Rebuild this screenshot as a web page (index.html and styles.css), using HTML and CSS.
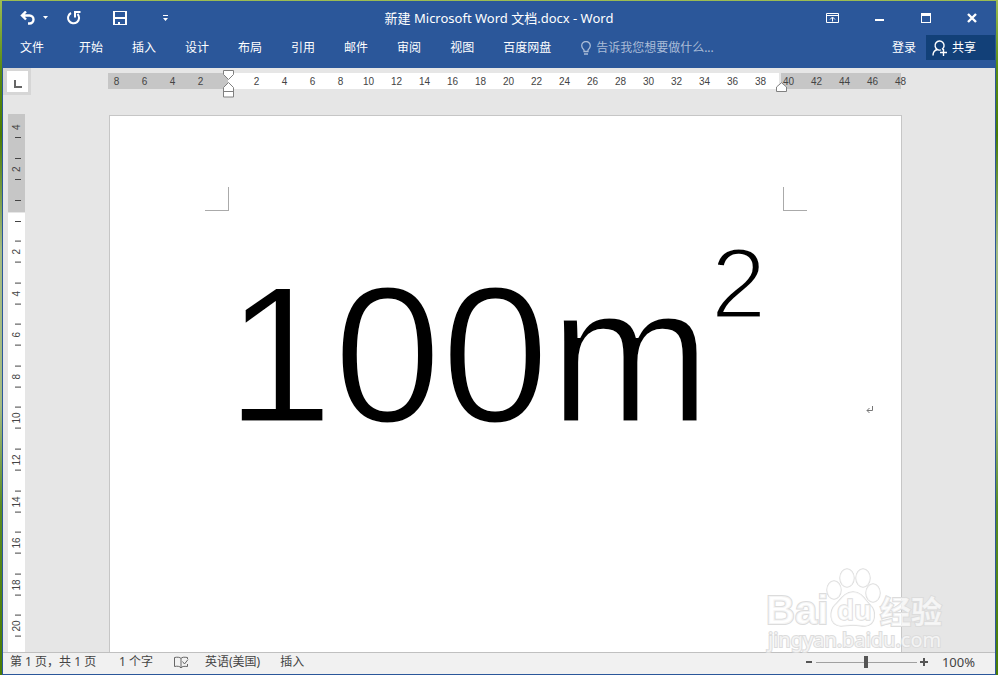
FILE: index.html
```html
<!DOCTYPE html>
<html lang="zh-CN">
<head>
<meta charset="utf-8">
<title>新建 Microsoft Word 文档.docx - Word</title>
<link rel="stylesheet" href="styles.css">
</head>
<body>
<div class="window">
  <header class="ribbon">
    <div class="titlebar">
      <div class="quick">
        <button class="icon-btn undo" aria-label="撤消"><svg width="28" height="14" viewBox="0 0 28 14"><path d="M1.500 4.500H9.500a4 4 0 0 1 0 8H8M6 .5L2 4.500l4 4" fill="none" stroke="#fff" stroke-width="2.400"/><path d="M23 5h5l-2.500 3z" fill="#fff"/></svg></button>
        <button class="icon-btn redo" aria-label="重复"><svg width="14" height="14" viewBox="0 0 14 14"><path d="M4 2A5.500 5.500 0 1 0 10.500 3" fill="none" stroke="#fff" stroke-width="2"/><path d="M8 6.500V1h5.500" fill="none" stroke="#fff" stroke-width="2"/></svg></button>
        <button class="icon-btn save" aria-label="保存"><svg width="14" height="14" viewBox="0 0 14 14"><path d="M0 0h14v14H0zM2 1v5h10V1zM2 8v5h1V9h8v4h1V8z" fill="#fff" fill-rule="evenodd"/><path d="M3 9h8v4H7v-2H5v2H3z" fill="#2b579a"/></svg></button>
        <button class="icon-btn custom" aria-label="自定义快速访问工具栏"><svg width="5" height="6" viewBox="0 0 5 6"><path d="M0 0h5v1H0zM0 3h5L2.500 6z" fill="#fff"/></svg></button>
      </div>
      <h1 class="title">新建 Microsoft Word 文档.docx - Word</h1>
      <div class="controls">
        <button class="icon-btn" aria-label="功能区显示选项"><svg width="13" height="10" viewBox="0 0 13 10"><path d="M.5.5h12v9H.5zM.5 2.500h12M6.500 8.500V4.500M4 6.500l2.500-2.500L9 6.500" fill="none" stroke="#fff"/></svg></button>
        <button class="icon-btn" aria-label="最小化"><svg width="10" height="10" viewBox="0 0 10 10"><path d="M0 6h9v2H0z" fill="#fff"/></svg></button>
        <button class="icon-btn" aria-label="最大化"><svg width="10" height="10" viewBox="0 0 10 10"><path d="M0 0h10v10H0zM1 3v6h8V3z" fill="#fff" fill-rule="evenodd"/></svg></button>
        <button class="icon-btn" aria-label="关闭"><svg width="10" height="10" viewBox="0 0 10 10"><path d="M1 1l8 8M9 1L1 9" stroke="#fff" stroke-width="2.400"/></svg></button>
      </div>
    </div>
    <div class="tabs">
      <button class="tab file">文件</button>
      <nav class="tab-list">
        <button class="tab">开始</button><button class="tab">插入</button><button class="tab">设计</button><button class="tab">布局</button><button class="tab">引用</button><button class="tab">邮件</button><button class="tab">审阅</button><button class="tab">视图</button><button class="tab">百度网盘</button>
      </nav>
      <label class="tell">
        <svg width="10" height="14" viewBox="0 0 10 14"><path d="M3 10.500V9C2 8 .7 6.800.7 4.800a4.300 4.300 0 0 1 8.600 0C9.300 6.800 8 8 7 9v1.500zM3 13h4" fill="none" stroke="#aabcd7" stroke-width="1.300"/></svg>
        <input type="text" placeholder="告诉我您想要做什么..." aria-label="告诉我您想要做什么">
      </label>
      <button class="tab">登录</button>
      <button class="share"><svg width="16" height="16" viewBox="0 0 16 16"><path d="M1 15.500C1 12 3 10 5.500 9.500A4.500 4.500 0 1 1 10 9.300M5.500 9.500C6 10 8 10.500 9 9.800M11.500 9v7M8 12.500h7" fill="none" stroke="#fff" stroke-width="1.400"/></svg>共享</button>
    </div>
  </header>

  <main class="workspace">
    <button class="tabstop" aria-label="左对齐式制表符"><span></span></button>
    <div class="ruler-row">
      <div class="ruler">
        <div class="marks"><span>8</span><span>6</span><span>4</span><span>2</span><span></span><span>2</span><span>4</span><span>6</span><span>8</span><span>10</span><span>12</span><span>14</span><span>16</span><span>18</span><span>20</span><span>22</span><span>24</span><span>26</span><span>28</span><span>30</span><span>32</span><span>34</span><span>36</span><span>38</span><span>40</span><span>42</span><span>44</span><span>46</span><span>48</span></div>
        <svg class="indent-left" width="11" height="28" viewBox="0 0 11 28"><path d="M.5.500h10v4l-5 5-5-5zM5.500 12.500l5 5v9.500H.5v-9.500zM.5 21.500h10" fill="#fff" stroke="#808080"/></svg>
        <svg class="indent-right" width="11" height="10" viewBox="0 0 11 10"><path d="M5.500.7l5 4.300v4.500H.5V5z" fill="#fff" stroke="#808080"/></svg>
      </div>
    </div>
    <div class="vruler">
      <div class="vmargin"><span>4</span><span>2</span></div>
      <div class="vbody"><span>2</span><span>4</span><span>6</span><span>8</span><span>10</span><span>12</span><span>14</span><span>16</span><span>18</span><span>20</span></div>
    </div>
    <div class="canvas">
      <article class="page">
        <div class="crops"><i class="crop start"></i><i class="crop end"></i></div>
        <div class="line">
          <p>100m<sup>2</sup></p>
          <svg class="mark" width="8" height="8" viewBox="0 0 8 8"><path d="M6.500 0v4.500H1M3.500 2L1 4.500 3.500 7" fill="none" stroke="#777"/></svg>
        </div>
      </article>
    </div>
  </main>

  <footer class="status">
    <span class="pages">第 1 页，共 1 页</span>
    <span class="words">1 个字</span>
    <button class="icon-btn proof" aria-label="校对"><svg width="15" height="13" viewBox="0 0 15 13"><path d="M7 2.500C6 1 3 1 .5 1.500v9C3 10 6 10 7 12V2.500C8 1 10 1 13.500 1.500V3M7 12c.5-1.500 3-2 6.500-1.500V8M8.500 5.500l2 2.500L14 3.500" fill="none" stroke="#666"/></svg></button>
    <button class="lang">英语(美国)</button>
    <button class="mode">插入</button>
    <div class="zoom">
      <button class="icon-btn" aria-label="缩小"><svg width="6" height="8" viewBox="0 0 6 8"><path d="M0 3h6v2H0z" fill="#555"/></svg></button>
      <input type="range" min="10" max="190" value="100" aria-label="缩放">
      <button class="icon-btn" aria-label="放大"><svg width="8" height="8" viewBox="0 0 8 8"><path d="M0 3h8v2H0zM3 0h2v8H3z" fill="#555"/></svg></button>
      <button class="percent">100%</button>
    </div>
  </footer>

  <svg class="watermark" width="184" height="86" viewBox="0 0 184 86">
    <g fill="#fff" fill-opacity=".7" stroke="#dcdcdc" stroke-width="1.500" paint-order="stroke">
      <g stroke-width="2"><text class="wm-logo" x="2" y="57">Bai</text><text class="wm-cjk" x="116" y="56">经验</text><text class="wm-url" x="4" y="80">jingyan.baidu.com</text></g>
      <ellipse cx="70" cy="23" rx="7" ry="9"/><ellipse cx="83" cy="11" rx="7" ry="9"/><ellipse cx="99" cy="11" rx="7" ry="9"/><ellipse cx="109" cy="26" rx="7" ry="9"/>
      <path d="M89 25c9 0 12 8 17 13 6 5 7 20-5 21-5 0-7-1-12-1s-8 1-12 1c-13-1-11-16-6-21 5-4 9-13 18-13z"/>
      <text class="wm-du" x="73" y="53">du</text>
    </g>
  </svg>
</div>
</body>
</html>
```
FILE: styles.css
```css
* { box-sizing: border-box; }

body {
  margin: 0;
  height: 100vh;
  padding: 1px 2px 0;
  background: linear-gradient(#9cbc52 0, #5a8c14 10%, #4a7c04 20%, #a4bc84 37%, #a4bc84 60%, #5a8c24 75%, #4a7c04);
  font: 12px/16px "Noto Sans", "Noto Sans CJK SC", sans-serif;
  overflow: hidden;
}

button, input {
  margin: 0;
  padding: 0;
  border: 0;
  background: none;
  font: inherit;
  color: inherit;
}

svg { display: block; }

.window {
  position: relative;
  display: flex;
  flex-direction: column;
  height: 100%;
  border: 1px solid #2b579a;
  border-top: 0;
  background: #e6e6e6;
}

/* Title bar and tabs */
.ribbon { flex: none; background: #2b579a; color: #fff; padding-bottom: 8px; }

.titlebar {
  display: grid;
  grid-template-columns: 1fr auto 1fr;
  align-items: center;
  height: 34px;
}
.quick { display: flex; align-items: center; padding-left: 17px; }
.redo { margin-left: 19px; }
.save { margin-left: 32px; }
.custom { margin-left: 36px; }
.title { margin: 0; font-size: 13px; font-weight: 400; line-height: 16px; }
.controls { display: flex; align-items: center; justify-content: flex-end; gap: 36px; padding-right: 18px; }

.tabs { display: flex; align-items: center; height: 25px; padding-left: 17px; }
.tab-list { display: flex; gap: 29px; margin: 0 30px 0 35px; }
.tell { display: flex; flex: 1; align-items: center; gap: 5px; }
.tell input { flex: 1; min-width: 0; outline: 0; }
.tell input::placeholder { color: #aabcd7; opacity: 1; }
.share {
  display: flex;
  align-items: center;
  gap: 4px;
  height: 25px;
  margin-left: 10px;
  padding: 0 19px 0 6px;
  background: #124078;
}

/* Rulers and document */
.workspace {
  flex: 1;
  min-height: 0;
  display: grid;
  grid-template: 46px 1fr / 22px 1fr;
}

.tabstop {
  width: 28px;
  height: 27px;
  padding: 8px 7px 4px;
  background: #fff;
  border: 3px solid #d6d6d6;
  border-left-width: 4px;
}
.tabstop span {
  display: block;
  width: 8px;
  height: 8px;
  border: solid #666;
  border-width: 0 0 2px 2px;
}

.ruler-row { display: flex; justify-content: center; padding: 5px 12px 0 0; }
.ruler {
  position: relative;
  width: 793px;
  height: 16px;
  background: linear-gradient(90deg, #c6c6c6 120px, #fff 120px 671px, #e6e6e6 671px 673px, #c6c6c6 673px);
}
.marks {
  display: grid;
  grid-template-columns: repeat(29, 28px);
  margin-left: -5px;
  font: 10px/17px "Liberation Sans", sans-serif;
  color: #444;
  text-align: center;
}
.indent-left { position: absolute; left: 115px; top: -3px; }
.indent-right { position: absolute; left: 668px; top: 9px; }

.vruler { width: 17px; margin-left: 5px; overflow: hidden; font: 10px/16px "Liberation Sans", sans-serif; color: #444; }
.vmargin {
  display: flex;
  flex-direction: column;
  justify-content: flex-end;
  height: 98px;
  padding-bottom: 22px;
  background: linear-gradient(#444, #444) 7px 86px / 6px 1px no-repeat #c6c6c6;
}
.vbody {
  display: grid;
  grid-template-rows: repeat(10, 1fr);
  height: 440px;
  margin-top: 1px;
  padding: 18px 0 6px;
  background: linear-gradient(#444, #444) 7px 8px / 6px 1px no-repeat #fff;
}
.vruler span {
  display: flex;
  align-items: center;
  justify-content: center;
  width: 17px;
  writing-mode: vertical-rl;
  transform: rotate(180deg);
  background:
    linear-gradient(#444, #444) 4px 10px / 6px 1px no-repeat,
    linear-gradient(#444, #444) 4px 31px / 6px 1px no-repeat;
}
.vmargin span { flex: none; height: 42px; }
.vmargin span:first-child { background: linear-gradient(#444, #444) 4px 10px / 6px 1px no-repeat; }

.canvas { display: flex; justify-content: center; padding: 1px 10px 0 0; overflow: hidden; }
.page {
  width: 793px;
  min-height: 700px;
  padding-top: 71px;
  background: #fff;
  border: 1px solid #c6c6c6;
}
.crops { display: flex; justify-content: space-between; padding: 0 94px 0 95px; }
.crop { width: 24px; height: 24px; border: 0 solid #aaa; border-bottom-width: 1px; }
.crop.start { border-right-width: 1px; }
.crop.end { border-left-width: 1px; }
.line { display: flex; align-items: baseline; justify-content: space-between; padding: 0 27px 0 116px; }
.line p {
  margin: 0;
  font: 194px/288px "Liberation Sans", sans-serif;
  color: #000;
  -webkit-text-stroke: 3px #fff;
}
.line sup { font-size: 100px; line-height: 0; vertical-align: 104px; }
.mark { position: relative; bottom: 8px; }

/* Status bar */
.status {
  flex: none;
  display: flex;
  align-items: center;
  height: 22px;
  padding: 0 20px 2px 7px;
  background: #f1f1f1;
  border-top: 1px solid #c0c0c0;
  border-bottom: 1px solid #f1f1f1;
  color: #444;
}
.pages { width: 109px; }
.words { width: 55px; }
.lang { margin-left: 16px; }
.mode { margin-left: 20px; }
.zoom { display: flex; align-items: center; margin-left: auto; }
.zoom input {
  appearance: none;
  width: 101px;
  height: 12px;
  margin: 0 3px 0 4px;
  background: linear-gradient(#a0a0a0, #a0a0a0) center / 100% 1px no-repeat;
}
.zoom input::-webkit-slider-thumb { appearance: none; width: 4px; height: 12px; background: #555; }
.percent { margin-left: 14px; font-size: 13px; }

/* Site watermark laid over the document */
.watermark { position: absolute; right: 47px; bottom: 21px; pointer-events: none; }
.wm-logo { font: 700 40px "Liberation Sans", sans-serif; }
.wm-du { font: 700 27px "Noto Sans", sans-serif; }
.wm-cjk { font: 700 31px "Noto Sans CJK SC", sans-serif; }
.wm-url { font: 400 20px "Noto Sans", sans-serif; }
```
